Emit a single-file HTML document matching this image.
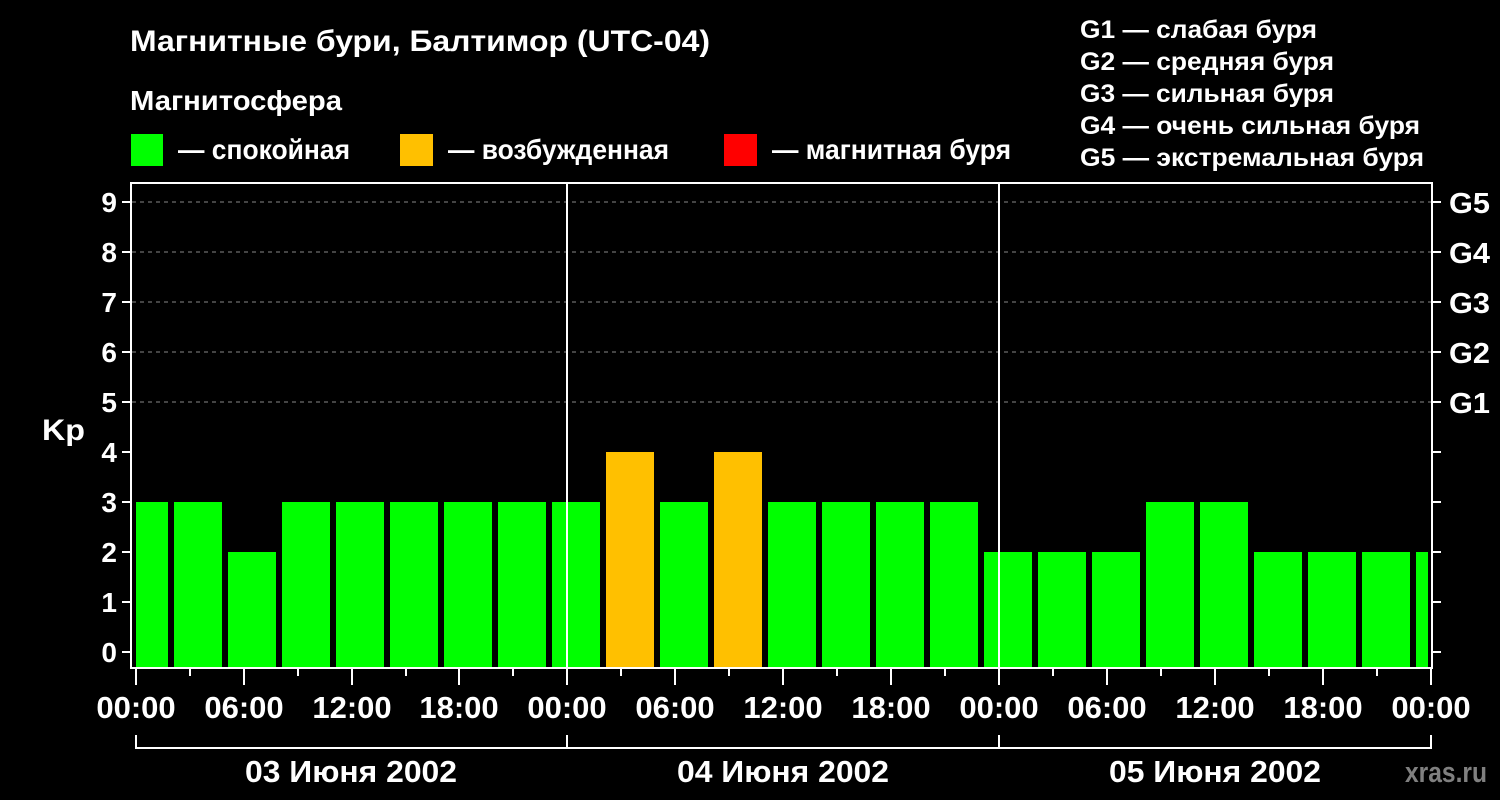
<!DOCTYPE html>
<html><head><meta charset="utf-8"><style>
html,body{margin:0;padding:0;background:#000;width:1500px;height:800px;overflow:hidden}
svg{display:block}
text{font-family:"Liberation Sans",Arial,sans-serif;font-weight:bold;fill:#fff}
</style></head><body>
<svg width="1500" height="800" viewBox="0 0 1500 800" xmlns="http://www.w3.org/2000/svg">
<rect width="1500" height="800" fill="#000"/>
<text x="130" y="51" font-size="30" textLength="580" lengthAdjust="spacingAndGlyphs">Магнитные бури, Балтимор (UTC-04)</text>
<text x="130" y="110" font-size="28" textLength="212" lengthAdjust="spacingAndGlyphs">Магнитосфера</text>
<rect x="131" y="134" width="32" height="32" fill="#00ff00"/>
<text x="178" y="159" font-size="28" textLength="172" lengthAdjust="spacingAndGlyphs">— спокойная</text>
<rect x="400" y="134" width="33" height="32" fill="#ffc000"/>
<text x="448" y="159" font-size="28" textLength="221" lengthAdjust="spacingAndGlyphs">— возбужденная</text>
<rect x="724" y="134" width="33" height="32" fill="#ff0000"/>
<text x="772" y="159" font-size="28" textLength="239" lengthAdjust="spacingAndGlyphs">— магнитная буря</text>
<g font-size="25">
<text x="1080" y="38" textLength="237" lengthAdjust="spacingAndGlyphs">G1 — слабая буря</text>
<text x="1080" y="70" textLength="254" lengthAdjust="spacingAndGlyphs">G2 — средняя буря</text>
<text x="1080" y="102" textLength="254" lengthAdjust="spacingAndGlyphs">G3 — сильная буря</text>
<text x="1080" y="134" textLength="340" lengthAdjust="spacingAndGlyphs">G4 — очень сильная буря</text>
<text x="1080" y="166" textLength="344" lengthAdjust="spacingAndGlyphs">G5 — экстремальная буря</text>
</g>
<g stroke="#888" stroke-width="1" stroke-dasharray="4,4">
<line x1="132" y1="202" x2="1431" y2="202"/>
<line x1="132" y1="252" x2="1431" y2="252"/>
<line x1="132" y1="302" x2="1431" y2="302"/>
<line x1="132" y1="352" x2="1431" y2="352"/>
<line x1="132" y1="402" x2="1431" y2="402"/>
</g>
<g fill="#00ff00">
<rect x="136" y="502" width="32" height="166"/>
<rect x="174" y="502" width="48" height="166"/>
<rect x="228" y="552" width="48" height="116"/>
<rect x="282" y="502" width="48" height="166"/>
<rect x="336" y="502" width="48" height="166"/>
<rect x="390" y="502" width="48" height="166"/>
<rect x="444" y="502" width="48" height="166"/>
<rect x="498" y="502" width="48" height="166"/>
<rect x="552" y="502" width="48" height="166"/>
<rect x="660" y="502" width="48" height="166"/>
<rect x="768" y="502" width="48" height="166"/>
<rect x="822" y="502" width="48" height="166"/>
<rect x="876" y="502" width="48" height="166"/>
<rect x="930" y="502" width="48" height="166"/>
<rect x="984" y="552" width="48" height="116"/>
<rect x="1038" y="552" width="48" height="116"/>
<rect x="1092" y="552" width="48" height="116"/>
<rect x="1146" y="502" width="48" height="166"/>
<rect x="1200" y="502" width="48" height="166"/>
<rect x="1254" y="552" width="48" height="116"/>
<rect x="1308" y="552" width="48" height="116"/>
<rect x="1362" y="552" width="48" height="116"/>
<rect x="1416" y="552" width="12" height="116"/>
</g>
<g fill="#ffc000">
<rect x="606" y="452" width="48" height="216"/>
<rect x="714" y="452" width="48" height="216"/>
</g>
<g stroke="#fff" stroke-width="2" fill="none">
<rect x="131" y="183" width="1301" height="485"/>
<line x1="567" y1="183" x2="567" y2="668"/>
<line x1="999" y1="183" x2="999" y2="668"/>
<path d="M122 202h9M122 252h9M122 302h9M122 352h9M122 402h9M122 452h9M122 502h9M122 552h9M122 602h9M122 652h9"/>
<path d="M1432 202h9M1432 252h9M1432 302h9M1432 352h9M1432 402h9M1432 452h9M1432 502h9M1432 552h9M1432 602h9M1432 652h9"/>
<path d="M136 668v17M244 668v17M352 668v17M459 668v17M567 668v17M675 668v17M783 668v17M891 668v17M999 668v17M1107 668v17M1215 668v17M1323 668v17M1431 668v17"/>
<path d="M190 668v8M298 668v8M406 668v8M513 668v8M621 668v8M729 668v8M837 668v8M945 668v8M1053 668v8M1161 668v8M1269 668v8M1377 668v8"/>
<path d="M136 735v13h1295v-13M567 735v13M999 735v13"/>
</g>
<g font-size="28" text-anchor="end">
<text x="117" y="212">9</text><text x="117" y="262">8</text><text x="117" y="312">7</text>
<text x="117" y="362">6</text><text x="117" y="412">5</text><text x="117" y="462">4</text>
<text x="117" y="512">3</text><text x="117" y="562">2</text><text x="117" y="612">1</text>
<text x="117" y="662">0</text>
</g>
<text x="42" y="440" font-size="30" textLength="43" lengthAdjust="spacingAndGlyphs">Kp</text>
<g font-size="29">
<text x="1449" y="213" textLength="41" lengthAdjust="spacingAndGlyphs">G5</text><text x="1449" y="263" textLength="41" lengthAdjust="spacingAndGlyphs">G4</text><text x="1449" y="313" textLength="41" lengthAdjust="spacingAndGlyphs">G3</text>
<text x="1449" y="363" textLength="41" lengthAdjust="spacingAndGlyphs">G2</text><text x="1449" y="413" textLength="41" lengthAdjust="spacingAndGlyphs">G1</text>
</g>
<g font-size="31" text-anchor="middle">
<text x="136" y="718">00:00</text><text x="244" y="718">06:00</text><text x="352" y="718">12:00</text><text x="459" y="718">18:00</text>
<text x="567" y="718">00:00</text><text x="675" y="718">06:00</text><text x="783" y="718">12:00</text><text x="891" y="718">18:00</text>
<text x="999" y="718">00:00</text><text x="1107" y="718">06:00</text><text x="1215" y="718">12:00</text><text x="1323" y="718">18:00</text>
<text x="1431" y="718">00:00</text>
<text x="351" y="782" textLength="212" lengthAdjust="spacingAndGlyphs">03 Июня 2002</text>
<text x="783" y="782" textLength="212" lengthAdjust="spacingAndGlyphs">04 Июня 2002</text>
<text x="1215" y="782" textLength="212" lengthAdjust="spacingAndGlyphs">05 Июня 2002</text>
</g>
<text x="1405" y="782" font-size="29" style="fill:#808080" textLength="82" lengthAdjust="spacingAndGlyphs">xras.ru</text>
</svg>
</body></html>
